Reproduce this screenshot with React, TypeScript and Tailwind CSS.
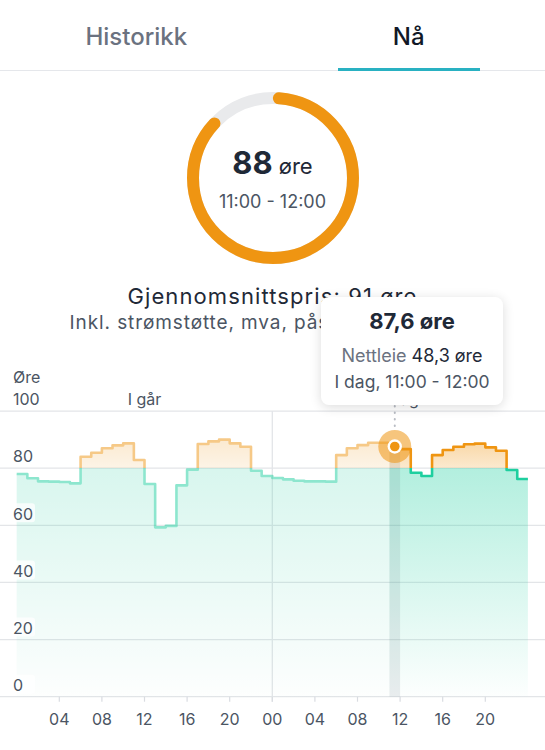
import React from "react";

const FONT = { fontFamily: "Inter, 'Noto Sans', sans-serif" };

const YESTERDAY = [78.0, 76.5, 75.4, 75.3, 75.2, 74.7, 84.0, 85.4, 87.0, 88.0, 88.7, 82.9, 74.5, 59.3, 59.8, 74.0, 79.5, 88.5, 89.4, 90.0, 88.7, 87.5, 79.1, 77.3];
const TODAY = [76.6, 76.1, 75.6, 75.4, 75.4, 75.3, 84.6, 87.0, 88.1, 88.9, 88.9, 87.6, 86.7, 78.4, 77.3, 84.6, 86.4, 87.5, 88.4, 88.6, 87.3, 86.1, 79.4, 76.2];
const PRICES = [...YESTERDAY, ...TODAY];
const NOW = 35; // index of current hour (today 11:00)

const X0 = 16.7;
const HOUR = 10.65;
const Y0 = 696.7;
const UNIT = 2.856;
const xAt = (h: number) => X0 + h * HOUR;
const yAt = (v: number) => Y0 - v * UNIT;

const ORANGE = "#ef9512";
const TEAL = "#1ecf9f";

function stepPath(from: number, to: number) {
  let d = `M${xAt(from)},${yAt(PRICES[from])}`;
  for (let i = from; i < to; i++) {
    d += ` H${xAt(i + 1)}`;
    if (i + 1 < to) d += ` V${yAt(PRICES[i + 1])}`;
  }
  return d;
}

function areaPath(from: number, to: number) {
  return `${stepPath(from, to)} V${Y0} H${xAt(from)} Z`;
}

function Donut() {
  const r = 80;
  const c = 2 * Math.PI * r;
  const share = 0.88;
  return (
    <div className="relative w-[172px] h-[172px]">
      <svg width="172" height="172" viewBox="0 0 172 172">
        <circle cx="86" cy="86" r={r} fill="none" stroke="#e9eaec" strokeWidth="12" />
        <circle
          cx="86"
          cy="86"
          r={r}
          fill="none"
          stroke={ORANGE}
          strokeWidth="12"
          strokeLinecap="round"
          strokeDasharray={`${c * share - 12} ${c}`}
          strokeDashoffset={-6}
          transform="rotate(-90 86 86)"
        />
      </svg>
      <div className="absolute inset-0 flex flex-col items-center justify-center pt-[2px]">
        <div className="flex items-baseline gap-[6px] leading-[36px] text-[#1f2937]">
          <span className="text-[31px] font-bold">88</span>
          <span className="text-[22px]">øre</span>
        </div>
        <div className="mt-[6px] text-[18px] leading-[24px] text-[#4b5563]">11:00 - 12:00</div>
      </div>
    </div>
  );
}

function Chart() {
  const grid = [100, 80, 60, 40, 20, 0];
  const ticks = ["04", "08", "12", "16", "20", "00", "04", "08", "12", "16", "20"];
  const yT = yAt(80);
  const g0 = 435;
  const span = Y0 - g0;
  const cut = (yT - g0) / span;
  return (
    <svg width="545" height="390" viewBox="0 360 545 390" className="block">
      <defs>
        <linearGradient id="fill" gradientUnits="userSpaceOnUse" x1="0" y1={g0} x2="0" y2={Y0}>
          <stop offset="0" stopColor={ORANGE} stopOpacity="0.42" />
          <stop offset={cut} stopColor={ORANGE} stopOpacity="0.2" />
          <stop offset={cut} stopColor={TEAL} stopOpacity="0.34" />
          <stop offset="1" stopColor={TEAL} stopOpacity="0.01" />
        </linearGradient>
        <linearGradient id="line" gradientUnits="userSpaceOnUse" x1="0" y1={g0} x2="0" y2={Y0}>
          <stop offset="0" stopColor={ORANGE} />
          <stop offset={cut} stopColor={ORANGE} />
          <stop offset={cut} stopColor={TEAL} />
          <stop offset="1" stopColor={TEAL} />
        </linearGradient>
      </defs>

      {/* grid */}
      {grid.map((v) => (
        <line key={v} x1="0" x2="545" y1={yAt(v)} y2={yAt(v)} stroke="#e3e5e8" strokeWidth="1.3" />
      ))}
      <line x1={xAt(24)} x2={xAt(24)} y1={yAt(100)} y2={Y0 + 5} stroke="#e3e5e8" strokeWidth="1.3" />
      {ticks.map((_, i) => (
        <line key={i} x1={xAt(4 + i * 4)} x2={xAt(4 + i * 4)} y1={Y0} y2={Y0 + 5} stroke="#d9dce1" strokeWidth="1.2" />
      ))}

      {/* past */}
      <g opacity="0.5">
        <path d={areaPath(0, NOW)} fill="url(#fill)" />
        <path d={stepPath(0, NOW)} fill="none" stroke="url(#line)" strokeWidth="2.6" strokeLinejoin="round" />
      </g>
      {/* now and future */}
      <path d={areaPath(NOW, 48)} fill="url(#fill)" />
      <rect x={xAt(NOW)} y={yAt(PRICES[NOW])} width={HOUR} height={Y0 - yAt(PRICES[NOW])} fill="#5a6e78" fillOpacity="0.12" />
      <path d={stepPath(NOW, 48)} fill="none" stroke="url(#line)" strokeWidth="2.6" strokeLinejoin="round" />

      {/* y labels */}
      <text x="13" y="383" fontSize="16" fill="#4b5563" style={FONT}>Øre</text>
      {grid.map((v) => (
        <g key={v}>
          <rect x="10" y={yAt(v) - 22} width={v === 100 ? 33 : 25} height="19" rx="3" fill="#ffffff" fillOpacity="0.75" />
          <text x="13" y={yAt(v) - 5.8} fontSize="16" fill="#4b5563" style={FONT}>{v}</text>
        </g>
      ))}
      <text x={xAt(12)} y="405" fontSize="16" fill="#4b5563" textAnchor="middle" style={FONT}>I går</text>
      <text x={xAt(36)} y="405" fontSize="16" fill="#4b5563" textAnchor="middle" style={FONT}>I dag</text>

      {/* x labels */}
      {ticks.map((t, i) => (
        <text key={i} x={xAt(4 + i * 4)} y="725" fontSize="16" fill="#4b5563" textAnchor="middle" style={FONT}>{t}</text>
      ))}

      {/* marker */}
      <line x1={xAt(NOW) + HOUR / 2} x2={xAt(NOW) + HOUR / 2} y1="406" y2="430" stroke="#b8bcc4" strokeWidth="2" strokeDasharray="0.5 6" strokeLinecap="round" />
      <circle cx={xAt(NOW) + HOUR / 2} cy={yAt(PRICES[NOW])} r="16.5" fill={ORANGE} fillOpacity="0.55" />
      <circle cx={xAt(NOW) + HOUR / 2} cy={yAt(PRICES[NOW])} r="7.2" fill="#ffffff" />
      <circle cx={xAt(NOW) + HOUR / 2} cy={yAt(PRICES[NOW])} r="4.8" fill={ORANGE} />
    </svg>
  );
}

export default function App() {
  return (
    <div className="relative w-[545px] h-[750px] overflow-hidden bg-white" style={FONT}>
      {/* Tabs */}
      <div className="flex h-[71px] border-b border-[#e5e7eb]">
        <button className="flex-1 flex items-center justify-center pt-[3px] text-[24px] font-medium text-[#6b7280]">
          Historikk
        </button>
        <button className="relative flex-1 flex items-center justify-center pt-[3px] text-[24px] font-medium text-[#111827]">
          Nå
          <span className="absolute bottom-[-1px] left-1/2 -translate-x-1/2 w-[142px] h-[3px] bg-[#29b1c2]" />
        </button>
      </div>

      {/* Current price */}
      <div className="flex justify-center pt-[21px]">
        <Donut />
      </div>

      <div className="mt-[18px] text-center text-[22px] leading-[28px] tracking-[1.1px] text-[#1f2937]">
        Gjennomsnittspris: 91 øre
      </div>
      <div className="mt-[1px] text-center text-[19px] leading-[24px] tracking-[0.9px] text-[#4b5563]">
        Inkl. strømstøtte, mva, påslag og nettleie.
      </div>

      <div className="absolute left-0 top-[360px]">
        <Chart />
      </div>

      {/* Tooltip */}
      <div className="absolute left-[321px] top-[297px] w-[182px] h-[108px] rounded-lg bg-white shadow-[0_2px_12px_rgba(0,0,0,0.14)] flex flex-col items-center pt-[10px]">
        <div className="text-[22px] font-bold leading-[28px] text-[#1f2937]">87,6 øre</div>
        <div className="mt-[9px] text-[18px] leading-[24px] text-[#6b7280]">
          Nettleie <span className="text-[#1f2937]">48,3 øre</span>
        </div>
        <div className="mt-[2px] text-[17.5px] leading-[24px] text-[#4b5563]">I dag, 11:00 - 12:00</div>
      </div>
    </div>
  );
}
